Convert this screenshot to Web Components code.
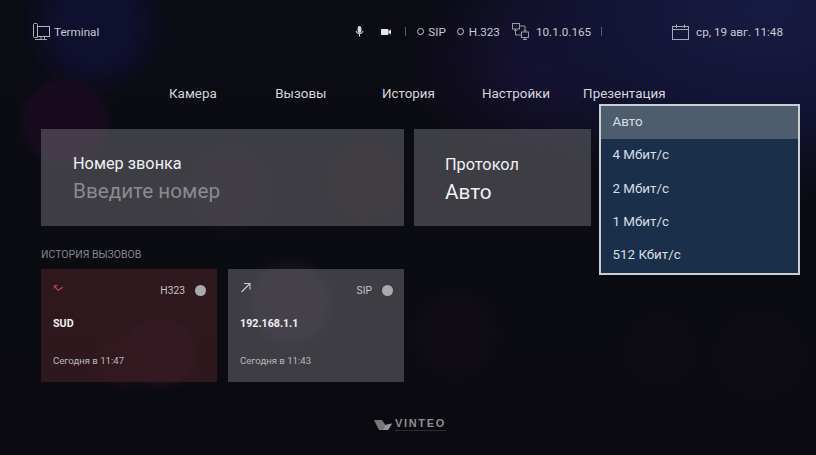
<!DOCTYPE html>
<html lang="ru">
<head>
<meta charset="utf-8">
<title>Terminal</title>
<style>
  html, body { margin: 0; height: 100%; background: #0b0b12; }
  body { overflow: hidden; font-family: Roboto, "Liberation Sans", sans-serif; }
</style>
</head>
<body>
<app-screen>
  <top-bar slot="top"></top-bar>
  <nav-menu slot="nav">
    <a style="margin-left:169px">Камера</a>
    <a style="margin-left:58.5px">Вызовы</a>
    <a style="margin-left:55.5px">История</a>
    <a style="margin-left:47px">Настройки</a>
    <a style="margin-left:33px">Презентация</a>
  </nav-menu>
  <field-panel slot="fields" style="width:363px" label="Номер звонка" value="Введите номер" muted></field-panel>
  <field-panel slot="fields" style="width:177px;padding-top:26px" label="Протокол" value="Авто" inset="31"></field-panel>
  <call-card slot="calls" tone="missed" proto="H323" name="SUD" time="Сегодня в 11:47"></call-card>
  <call-card slot="calls" tone="out" proto="SIP" name="192.168.1.1" time="Сегодня в 11:43"></call-card>
  <vinteo-logo slot="logo"></vinteo-logo>
  <speed-menu slot="overlay">
    <div class="on">Авто</div>
    <div>4 Мбит/с</div>
    <div>2 Мбит/с</div>
    <div>1 Мбит/с</div>
    <div>512 Кбит/с</div>
  </speed-menu>
</app-screen>

<template id="appScreen">
  <style>
    :host {
      display: flex;
      flex-direction: column;
      position: relative;
      overflow: hidden;
      width: 816px;
      height: 455px;
      color: #e4e4e8;
      background:
        radial-gradient(circle 48px at 65px 122px, #170b1d 0 80%, transparent 100%),
        radial-gradient(circle 75px at 95px 25px, #0f0f2e 0 50%, transparent 100%),
        radial-gradient(circle 48px at 290px 303px, #17121f 0 70%, transparent 100%),
        radial-gradient(circle 30px at 123px 363px, #160c16 0 70%, transparent 100%),
        radial-gradient(circle 40px at 160px 353px, #1a0e1c 0 75%, transparent 100%),
        radial-gradient(circle 48px at 230px 190px, #110d16 0 75%, transparent 100%),
        radial-gradient(circle 42px at 365px 182px, #150d13 0 70%, transparent 100%),
        radial-gradient(circle 50px at 455px 335px, #0f0c14 0 70%, transparent 100%),
        radial-gradient(circle 40px at 660px 350px, #0e0c13 0 70%, transparent 100%),
        radial-gradient(circle 50px at 760px 355px, #0e0c13 0 70%, transparent 100%),
        radial-gradient(ellipse 340px 190px at 770px 10px, #181b42 0, #131435 50%, transparent 100%),
        radial-gradient(ellipse 130px 90px at 540px 70px, #170f30 0, transparent 100%),
        linear-gradient(#0b0b14, #0a0a10);
    }
    .fields { display: flex; gap: 10px; margin: 25px 0 0 41px; }
    h2 {
      margin: 22px 0 0 41px;
      font: 400 10.5px/14px Roboto, sans-serif;
      color: #85858c;
    }
    .calls { display: flex; gap: 11px; margin: 7px 0 0 41px; }
    .logo { display: flex; justify-content: center; margin-top: 34px; padding-left: 4px; }
  </style>
  <slot name="top"></slot>
  <slot name="nav"></slot>
  <div class="fields"><slot name="fields"></slot></div>
  <h2>ИСТОРИЯ ВЫЗОВОВ</h2>
  <div class="calls"><slot name="calls"></slot></div>
  <div class="logo"><slot name="logo"></slot></div>
  <slot name="overlay"></slot>
</template>

<template id="topBar">
  <style>
    :host {
      display: flex;
      align-items: center;
      box-sizing: border-box;
      height: 63px;
      padding: 0 33px;
      font-size: 11.7px;
      color: #c9c9cf;
    }
    .group { display: flex; align-items: center; }
    .sep { width: 1px; height: 9px; background: #5c5c66; }
    .dot {
      box-sizing: border-box;
      width: 7px; height: 7px;
      margin-right: 4px;
      border: 1.3px solid #c9c9cf;
      border-radius: 50%;
    }
    svg { display: block; flex: none; }
  </style>
  <div class="group">
    <svg width="17" height="17" viewBox="0 0 17 17" fill="none" stroke="#b4b4ba">
      <path d="M4.5 14.5H1.5C.9 14.5.5 14.1.5 13.5V1.5C.5.9.9.5 1.5.5H3.5C4.1.5 4.5.9 4.5 1.5V3"/>
      <rect x="4.5" y="3.5" width="12" height="10"/>
      <path d="M2 16.5H14M8 14V16.5M11.5 14V16.5" stroke-width=".9"/>
    </svg>
    <span style="margin-left:4px">Terminal</span>
  </div>
  <div class="group" style="margin-left:256px">
    <svg width="9" height="11" viewBox="0 0 9 11" fill="#d8d8dd">
      <rect x="2.6" y="0" width="3.8" height="7" rx="1.9"/>
      <path d="M.6 4.8H1.5C1.7 6.3 3 7.3 4.5 7.3S7.3 6.3 7.5 4.8H8.4C8.2 6.6 6.9 7.9 5 8.1V10.5H4V8.1C2.1 7.9.8 6.6.6 4.8Z"/>
    </svg>
    <svg style="margin-left:17px" width="10" height="8" viewBox="0 0 10 8" fill="#e6e6ea">
      <rect x="0" y="1" width="7.4" height="6" rx=".8"/>
      <path d="M7.4 3.2 10 1.4V6.6L7.4 4.8Z"/>
    </svg>
    <div class="sep" style="margin:0 11px 0 14px"></div>
    <div class="dot"></div><span>SIP</span>
    <div class="dot" style="margin:0 5px 0 11px"></div><span>H.323</span>
    <svg style="margin-left:12px" width="17" height="17" viewBox="0 0 17 17" fill="none" stroke="#a8a8ae" stroke-width=".9">
      <rect x=".5" y=".5" width="7" height="5.5"/>
      <rect x="9.5" y="9" width="7" height="5.5"/>
      <path d="M8 3H13V8.5M11.7 7 13 8.5 14.3 7M9 12H3.5V6.5M2.2 8 3.5 6.5 4.8 8M11 16.5H15M13 14.5V16.5"/>
    </svg>
    <span style="margin-left:7px">10.1.0.165</span>
    <div class="sep" style="margin-left:10px"></div>
  </div>
  <div class="group" style="margin-left:auto">
    <svg width="17" height="16" viewBox="0 0 17 16" fill="none" stroke="#a8a8af">
      <rect x=".5" y="2.5" width="16" height="13"/>
      <path d="M.5 5.5H16.5M4.5 .5V4M12.5 .5V4"/>
    </svg>
    <span style="margin-left:7px">ср, 19 авг. 11:48</span>
  </div>
</template>

<template id="navMenu">
  <style>
    :host {
      display: flex;
      align-items: center;
      height: 20px;
      margin-top: 21px;
      font-size: 13.4px;
      line-height: 20px;
      color: #d6d6db;
    }
  </style>
  <slot></slot>
</template>

<template id="fieldPanel">
  <style>
    :host {
      display: block;
      box-sizing: border-box;
      height: 97px;
      padding: 25px 0 0 var(--inset, 32px);
      background: rgba(118, 118, 124, .47);
    }
    .label { font-size: 16.3px; line-height: 20px; color: #f0f0f3; }
    .value { margin-top: 4px; font-size: 20.7px; line-height: 26px; color: #f0f0f3; }
    :host([muted]) .value { color: #8a8a91; }
  </style>
  <div class="label"></div>
  <div class="value"></div>
</template>

<template id="callCard">
  <style>
    :host {
      display: block;
      position: relative;
      box-sizing: border-box;
      width: 176px;
      height: 113px;
      padding: 0 11px 0 12px;
      background: rgba(118, 118, 124, .48);
    }
    :host([tone=missed]) { background: rgba(72, 34, 38, .6); }
    .head { display: flex; align-items: center; height: 43px; font-size: 10.3px; color: #c4c4c9; }
    .icon { margin-bottom: 3px; }
    .proto { margin-left: auto; }
    .led { width: 11px; height: 11px; margin: 0 0 0 10px; border-radius: 50%; background: #aaaaac; }
    .name { margin-top: 4px; font-size: 10.7px; line-height: 16px; font-weight: 700; color: #f0f0f2; }
    .time { margin-top: 22px; font-size: 9.6px; line-height: 14px; color: #b8b8bd; }
  </style>
  <div class="head">
    <span class="icon"></span>
    <span class="proto"></span>
    <span class="led"></span>
  </div>
  <div class="name"></div>
  <div class="time"></div>
</template>

<template id="speedMenu">
  <style>
    :host {
      display: block;
      position: absolute;
      left: 599px;
      top: 104px;
      box-sizing: border-box;
      width: 201px;
      height: 171px;
      border: 2px solid #c9ced3;
      background: #1a304a;
      font-size: 13.4px;
      color: #d8dde2;
    }
    ::slotted(div) {
      box-sizing: border-box;
      height: 33.3px;
      padding-left: 11.5px;
      line-height: 32px;
    }
    ::slotted(.on) { background: #4d5d6e; }
  </style>
  <slot></slot>
</template>

<template id="vinteoLogo">
  <style>
    :host { display: flex; align-items: center; gap: 3px; height: 16px; color: #8d8d92; }
    .word { font: 700 11px/10px "Liberation Sans", sans-serif; letter-spacing: 1.7px; }
    .sub { height: 1px; margin-top: 2px; background: #2c2c31; }
  </style>
  <svg width="18" height="11" viewBox="0 0 18 11">
    <path d="M0 1H8L11.5 6 18 4.5 14 11H5Z" fill="#77777c"/>
    <path d="M8 1 11.5 6 9 11H14L18 4.5 11.5 6Z" fill="#98989c"/>
  </svg>
  <div>
    <div class="word">VINTEO</div>
    <div class="sub"></div>
  </div>
</template>

<script>
function shadow(el, id) {
  el.attachShadow({ mode: 'open' });
  el.shadowRoot.append(document.getElementById(id).content.cloneNode(true));
  return el.shadowRoot;
}

customElements.define('app-screen', class extends HTMLElement {
  constructor() { super(); shadow(this, 'appScreen'); }
});
customElements.define('top-bar', class extends HTMLElement {
  constructor() { super(); shadow(this, 'topBar'); }
});
customElements.define('nav-menu', class extends HTMLElement {
  constructor() { super(); shadow(this, 'navMenu'); }
});
customElements.define('speed-menu', class extends HTMLElement {
  constructor() { super(); shadow(this, 'speedMenu'); }
});
customElements.define('vinteo-logo', class extends HTMLElement {
  constructor() { super(); shadow(this, 'vinteoLogo'); }
});

customElements.define('field-panel', class extends HTMLElement {
  connectedCallback() {
    const root = this.shadowRoot || shadow(this, 'fieldPanel');
    root.querySelector('.label').textContent = this.getAttribute('label');
    root.querySelector('.value').textContent = this.getAttribute('value');
    if (this.hasAttribute('inset')) this.style.setProperty('--inset', this.getAttribute('inset') + 'px');
  }
});

const callIcons = {
  missed: '<svg width="11" height="9" viewBox="0 0 11 9" fill="none" stroke="#b5474c" stroke-width="1.2"><path d="M1.5 1.5 5 6.5 10 3M1.5 1.5H4.5M1.5 1.5V4.5"/></svg>',
  out: '<svg width="11" height="11" viewBox="0 0 11 11" fill="none" stroke="#c9c9ce" stroke-width="1.1"><path d="M1.5 10 10 1.5M4 1.5H10V7.5"/></svg>'
};

customElements.define('call-card', class extends HTMLElement {
  connectedCallback() {
    const root = this.shadowRoot || shadow(this, 'callCard');
    root.querySelector('.icon').innerHTML = callIcons[this.getAttribute('tone')];
    root.querySelector('.proto').textContent = this.getAttribute('proto');
    root.querySelector('.name').textContent = this.getAttribute('name');
    root.querySelector('.time').textContent = this.getAttribute('time');
  }
});
</script>
</body>
</html>
